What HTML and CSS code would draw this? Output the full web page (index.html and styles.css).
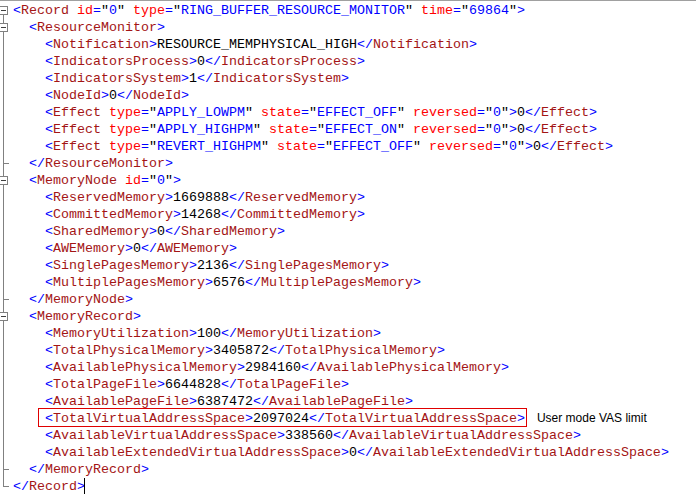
FILE: index.html
```html
<!DOCTYPE html>
<html lang="en">
<head>
    <meta charset="UTF-8">
    <title>Ring buffer record</title>
    <link rel="stylesheet" href="styles.css">
</head>
<body>
    <div class="editor">
        <div class="line"><span class="gutter fold first"></span><span class="code"><span class="d">&lt;</span><span class="n">Record</span> <span class="a">id</span><span class="d">=</span>"<span class="v">0</span>" <span class="a">type</span><span class="d">=</span>"<span class="v">RING_BUFFER_RESOURCE_MONITOR</span>" <span class="a">time</span><span class="d">=</span>"<span class="v">69864</span>"<span class="d">&gt;</span></span></div>
        <div class="line"><span class="gutter fold"></span><span class="code i1"><span class="d">&lt;</span><span class="n">ResourceMonitor</span><span class="d">&gt;</span></span></div>
        <div class="line"><span class="gutter bar"></span><span class="code i2"><span class="d">&lt;</span><span class="n">Notification</span><span class="d">&gt;</span>RESOURCE_MEMPHYSICAL_HIGH<span class="d">&lt;/</span><span class="n">Notification</span><span class="d">&gt;</span></span></div>
        <div class="line"><span class="gutter bar"></span><span class="code i2"><span class="d">&lt;</span><span class="n">IndicatorsProcess</span><span class="d">&gt;</span>0<span class="d">&lt;/</span><span class="n">IndicatorsProcess</span><span class="d">&gt;</span></span></div>
        <div class="line"><span class="gutter bar"></span><span class="code i2"><span class="d">&lt;</span><span class="n">IndicatorsSystem</span><span class="d">&gt;</span>1<span class="d">&lt;/</span><span class="n">IndicatorsSystem</span><span class="d">&gt;</span></span></div>
        <div class="line"><span class="gutter bar"></span><span class="code i2"><span class="d">&lt;</span><span class="n">NodeId</span><span class="d">&gt;</span>0<span class="d">&lt;/</span><span class="n">NodeId</span><span class="d">&gt;</span></span></div>
        <div class="line"><span class="gutter bar"></span><span class="code i2"><span class="d">&lt;</span><span class="n">Effect</span> <span class="a">type</span><span class="d">=</span>"<span class="v">APPLY_LOWPM</span>" <span class="a">state</span><span class="d">=</span>"<span class="v">EFFECT_OFF</span>" <span class="a">reversed</span><span class="d">=</span>"<span class="v">0</span>"<span class="d">&gt;</span>0<span class="d">&lt;/</span><span class="n">Effect</span><span class="d">&gt;</span></span></div>
        <div class="line"><span class="gutter bar"></span><span class="code i2"><span class="d">&lt;</span><span class="n">Effect</span> <span class="a">type</span><span class="d">=</span>"<span class="v">APPLY_HIGHPM</span>" <span class="a">state</span><span class="d">=</span>"<span class="v">EFFECT_ON</span>" <span class="a">reversed</span><span class="d">=</span>"<span class="v">0</span>"<span class="d">&gt;</span>0<span class="d">&lt;/</span><span class="n">Effect</span><span class="d">&gt;</span></span></div>
        <div class="line"><span class="gutter bar"></span><span class="code i2"><span class="d">&lt;</span><span class="n">Effect</span> <span class="a">type</span><span class="d">=</span>"<span class="v">REVERT_HIGHPM</span>" <span class="a">state</span><span class="d">=</span>"<span class="v">EFFECT_OFF</span>" <span class="a">reversed</span><span class="d">=</span>"<span class="v">0</span>"<span class="d">&gt;</span>0<span class="d">&lt;/</span><span class="n">Effect</span><span class="d">&gt;</span></span></div>
        <div class="line"><span class="gutter end"></span><span class="code i1"><span class="d">&lt;/</span><span class="n">ResourceMonitor</span><span class="d">&gt;</span></span></div>
        <div class="line"><span class="gutter fold"></span><span class="code i1"><span class="d">&lt;</span><span class="n">MemoryNode</span> <span class="a">id</span><span class="d">=</span>"<span class="v">0</span>"<span class="d">&gt;</span></span></div>
        <div class="line"><span class="gutter bar"></span><span class="code i2"><span class="d">&lt;</span><span class="n">ReservedMemory</span><span class="d">&gt;</span>1669888<span class="d">&lt;/</span><span class="n">ReservedMemory</span><span class="d">&gt;</span></span></div>
        <div class="line"><span class="gutter bar"></span><span class="code i2"><span class="d">&lt;</span><span class="n">CommittedMemory</span><span class="d">&gt;</span>14268<span class="d">&lt;/</span><span class="n">CommittedMemory</span><span class="d">&gt;</span></span></div>
        <div class="line"><span class="gutter bar"></span><span class="code i2"><span class="d">&lt;</span><span class="n">SharedMemory</span><span class="d">&gt;</span>0<span class="d">&lt;/</span><span class="n">SharedMemory</span><span class="d">&gt;</span></span></div>
        <div class="line"><span class="gutter bar"></span><span class="code i2"><span class="d">&lt;</span><span class="n">AWEMemory</span><span class="d">&gt;</span>0<span class="d">&lt;/</span><span class="n">AWEMemory</span><span class="d">&gt;</span></span></div>
        <div class="line"><span class="gutter bar"></span><span class="code i2"><span class="d">&lt;</span><span class="n">SinglePagesMemory</span><span class="d">&gt;</span>2136<span class="d">&lt;/</span><span class="n">SinglePagesMemory</span><span class="d">&gt;</span></span></div>
        <div class="line"><span class="gutter bar"></span><span class="code i2"><span class="d">&lt;</span><span class="n">MultiplePagesMemory</span><span class="d">&gt;</span>6576<span class="d">&lt;/</span><span class="n">MultiplePagesMemory</span><span class="d">&gt;</span></span></div>
        <div class="line"><span class="gutter end"></span><span class="code i1"><span class="d">&lt;/</span><span class="n">MemoryNode</span><span class="d">&gt;</span></span></div>
        <div class="line"><span class="gutter fold"></span><span class="code i1"><span class="d">&lt;</span><span class="n">MemoryRecord</span><span class="d">&gt;</span></span></div>
        <div class="line"><span class="gutter bar"></span><span class="code i2"><span class="d">&lt;</span><span class="n">MemoryUtilization</span><span class="d">&gt;</span>100<span class="d">&lt;/</span><span class="n">MemoryUtilization</span><span class="d">&gt;</span></span></div>
        <div class="line"><span class="gutter bar"></span><span class="code i2"><span class="d">&lt;</span><span class="n">TotalPhysicalMemory</span><span class="d">&gt;</span>3405872<span class="d">&lt;/</span><span class="n">TotalPhysicalMemory</span><span class="d">&gt;</span></span></div>
        <div class="line"><span class="gutter bar"></span><span class="code i2"><span class="d">&lt;</span><span class="n">AvailablePhysicalMemory</span><span class="d">&gt;</span>2984160<span class="d">&lt;/</span><span class="n">AvailablePhysicalMemory</span><span class="d">&gt;</span></span></div>
        <div class="line"><span class="gutter bar"></span><span class="code i2"><span class="d">&lt;</span><span class="n">TotalPageFile</span><span class="d">&gt;</span>6644828<span class="d">&lt;/</span><span class="n">TotalPageFile</span><span class="d">&gt;</span></span></div>
        <div class="line"><span class="gutter bar"></span><span class="code i2"><span class="d">&lt;</span><span class="n">AvailablePageFile</span><span class="d">&gt;</span>6387472<span class="d">&lt;/</span><span class="n">AvailablePageFile</span><span class="d">&gt;</span></span></div>
        <div class="line"><span class="gutter bar"></span><span class="code i2"><span class="mark"><span class="d">&lt;</span><span class="n">TotalVirtualAddressSpace</span><span class="d">&gt;</span>2097024<span class="d">&lt;/</span><span class="n">TotalVirtualAddressSpace</span><span class="d">&gt;</span></span></span><span class="note">User mode VAS limit</span></div>
        <div class="line"><span class="gutter bar"></span><span class="code i2"><span class="d">&lt;</span><span class="n">AvailableVirtualAddressSpace</span><span class="d">&gt;</span>338560<span class="d">&lt;/</span><span class="n">AvailableVirtualAddressSpace</span><span class="d">&gt;</span></span></div>
        <div class="line"><span class="gutter bar"></span><span class="code i2"><span class="d">&lt;</span><span class="n">AvailableExtendedVirtualAddressSpace</span><span class="d">&gt;</span>0<span class="d">&lt;/</span><span class="n">AvailableExtendedVirtualAddressSpace</span><span class="d">&gt;</span></span></div>
        <div class="line"><span class="gutter end"></span><span class="code i1"><span class="d">&lt;/</span><span class="n">MemoryRecord</span><span class="d">&gt;</span></span></div>
        <div class="line"><span class="gutter last"></span><span class="code"><span class="d">&lt;/</span><span class="n">Record</span><span class="d">&gt;</span><span class="caret"></span></span></div>
    </div>
</body>
</html>
```

FILE: styles.css
```css
body {
    margin: 0;
    background-color: #fff;
}

.editor {
    border-top: 1px solid #a0a0a0;
    padding-top: 1px;
    font-family: "Liberation Mono", "Courier New", monospace;
    font-size: 13.333px;
    color: #000;
}

.line {
    display: flex;
    align-items: center;
    height: 17px;
    line-height: 17px;
    white-space: pre;
}

/* fold margin */
.gutter {
    position: relative;
    flex: none;
    width: 13px;
    height: 17px;
}

.gutter::before {
    content: "";
    position: absolute;
    left: 3px;
    width: 1px;
    top: 0;
    bottom: 0;
    background: #808080;
}

.gutter.first::before {
    top: 8px;
}

.gutter.last::before {
    bottom: 8px;
}

.gutter.end::after,
.gutter.last::after {
    content: "";
    position: absolute;
    left: 3px;
    top: 8px;
    width: 6px;
    height: 1px;
    background: #808080;
}

.gutter.fold::after {
    content: "";
    position: absolute;
    left: -1px;
    top: 4px;
    width: 7px;
    height: 7px;
    border: 1px solid #808080;
    background: linear-gradient(#404040, #404040) center / 5px 1px no-repeat, #fff;
}

.i1 {
    padding-left: 16px;
}

.i2 {
    padding-left: 32px;
}

/* syntax colours */
.d { color: #0000ff; }
.n { color: #a31515; }
.a { color: #ff0000; }
.v { color: #0000ff; }

.mark {
    position: relative;
    display: inline-block;
    line-height: 17px;
}

.mark::before {
    content: "";
    position: absolute;
    left: -7px;
    right: -2px;
    top: -2px;
    bottom: 0;
    border: 1px solid #e00000;
}

.note {
    margin-left: 12px;
    font-family: "Liberation Sans", Arial, sans-serif;
    font-size: 12px;
}

.caret {
    display: inline-block;
    width: 1px;
    height: 16px;
    margin-left: -1px;
    vertical-align: middle;
    background: #000;
}
```
